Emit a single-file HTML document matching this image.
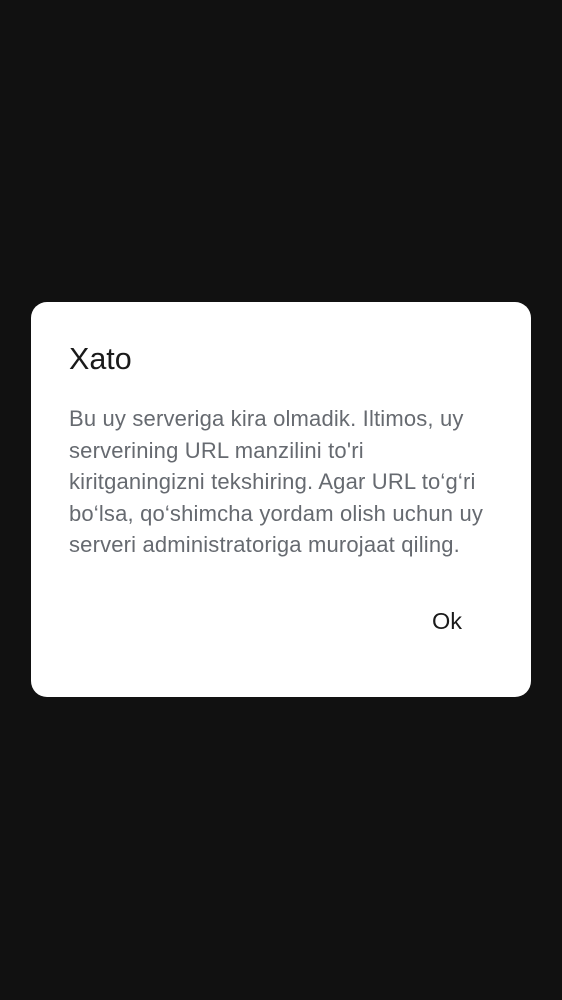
<!DOCTYPE html>
<html><head><meta charset="utf-8"><style>
html,body{margin:0;padding:0;width:562px;height:1000px;background:#111111;overflow:hidden;font-family:"Liberation Sans",sans-serif;}
.d{position:absolute;left:31px;top:302px;width:500px;height:395px;background:#fff;border-radius:16px;}
.t{position:absolute;left:38px;top:40px;font-size:30.5px;color:#1a1a1a;}
.b{position:absolute;left:38px;top:101px;white-space:nowrap;font-size:22px;letter-spacing:0.17px;line-height:31.5px;color:#666a70;}
.ok{position:absolute;left:401px;top:306px;font-size:23.5px;color:#1a1a1a;}
</style></head><body>
<div class="d">
<div class="t">Xato</div>
<div class="b">Bu uy serveriga kira olmadik. Iltimos, uy<br>serverining URL manzilini to'ri<br>kiritganingizni tekshiring. Agar URL to‘g‘ri<br>bo‘lsa, qo‘shimcha yordam olish uchun uy<br>serveri administratoriga murojaat qiling.</div>
<div class="ok">Ok</div>
</div>
</body></html>
